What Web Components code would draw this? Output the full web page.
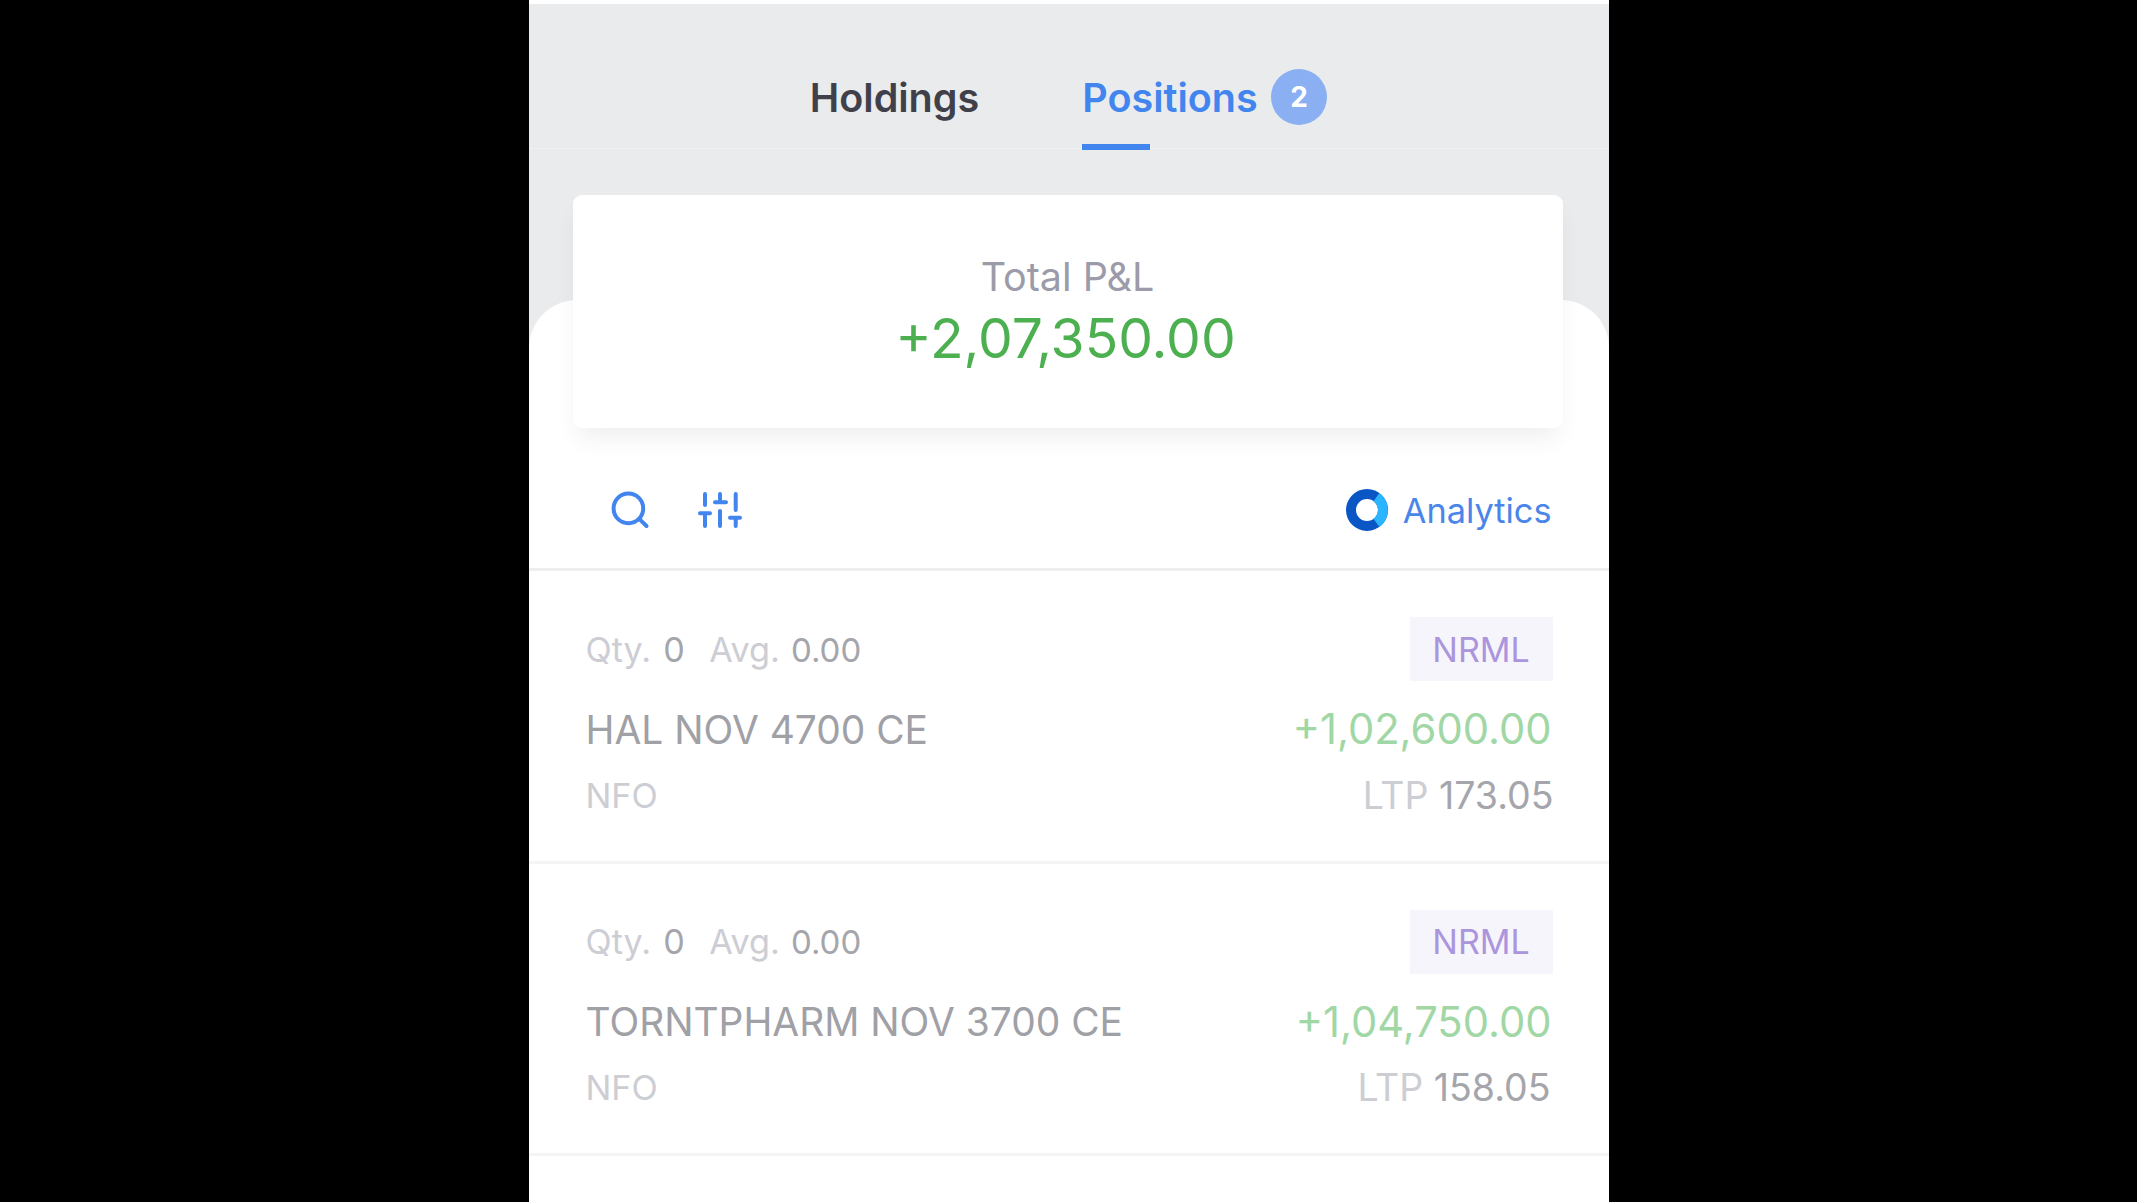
<!DOCTYPE html>
<html><head><meta charset="utf-8"><style>
html,body{margin:0;height:100%;background:#000}
body{font-family:Inter,"Noto Sans",sans-serif;overflow:hidden}
</style></head><body>
<app-stage>
  <tab-bar></tab-bar>
  <pnl-card label="Total P&amp;L" value="+2,07,350.00"></pnl-card>
  <list-panel>
    <tool-bar></tool-bar>
    <pos-row style="--ltp-mr:-1px" qty="0" avg="0.00" name="HAL NOV 4700 CE" pnl="+1,02,600.00" ltp="173.05"></pos-row>
    <pos-row style="--ltp-mr:2px" qty="0" avg="0.00" name="TORNTPHARM NOV 3700 CE" pnl="+1,04,750.00" ltp="158.05"></pos-row>
  </list-panel>
</app-stage>
<script>
function def(name, css, html, attrs){
  customElements.define(name, class extends HTMLElement{
    connectedCallback(){
      if(this.shadowRoot) return;
      const r=this.attachShadow({mode:'open'});
      let h=html;
      (attrs||[]).forEach(a=>{h=h.split('{{'+a+'}}').join((this.getAttribute(a)||'').replace(/&/g,'&amp;'))});
      r.innerHTML='<style>'+css+'</style>'+h;
    }
  });
}
def('app-stage',`
:host{display:flex;justify-content:center;height:1202px;background:#000;}
.phone{width:1080px;height:1202px;background:#eaebed;border-top:4px solid #fff;box-sizing:border-box;overflow:hidden;display:flex;flex-direction:column}
`,`<div class="phone"><slot></slot></div>`);
def('tab-bar',`
:host{display:flex;justify-content:center;height:145px;box-sizing:border-box;gap:103px;
 background:linear-gradient(#eef0f1,#eef0f1) 0 100%/100% 1px no-repeat;font-size:39.5px;font-weight:600}
.t{display:flex;align-items:center;height:145px;box-sizing:border-box;padding-top:42px;color:#3f4049;position:relative}
.a{color:#4285ee}
.b{width:56px;height:56px;border-radius:50%;background:#8aaff2;color:#fff;font-size:28px;font-weight:700;display:flex;align-items:center;justify-content:center;margin-left:13.5px;margin-top:-2px}
.u{position:absolute;left:0;bottom:-1px;width:68px;height:6px;background:#4285ee}
`,`<div class="t">Holdings</div><div class="t a">Positions<span class="b">2</span><span class="u"></span></div>`);
def('pnl-card',`
:host{display:flex;position:relative;z-index:1;flex-direction:column;align-items:center;box-sizing:border-box;width:990px;height:233px;margin:46px 0 0 44px;padding-top:59px;background:#fff;border-radius:9px;box-shadow:0 14px 24px -6px rgba(60,60,70,.09)}
.l{font-size:39.5px;line-height:46px;color:#9c9ba9;}
.v{font-size:55.2px;line-height:64px;color:#4caf50;margin-top:6px;margin-left:-4px}
`,`<div class="l">{{label}}</div><div class="v">{{value}}</div>`,['label','value']);
def('list-panel',`
:host{display:block;flex:1;background:#fff;border-radius:48px 48px 0 0;margin-top:-128px;padding-top:128px}
`,`<slot></slot>`);
def('tool-bar',`
:host{display:flex;align-items:center;box-sizing:border-box;height:143px;border-bottom:3px solid #eeeeef;padding:25px 57px 0 0;color:#4a85ea}
svg{display:block;flex:none}
.sp{flex:1}
.ring{margin-top:-2px}
.a{font-size:34.3px;margin-left:15px}
`,`<svg width="240" height="115" viewBox="0 0 240 115" fill="none" stroke="#4285ee" stroke-width="4" stroke-linecap="round">
<g transform="translate(-529,-453)">
<circle cx="628.4" cy="508.4" r="14.8"/><path d="M639.2 518.9L646.5 526"/>
<path d="M705 494V505M705 513.3V526M700 513.3H710M720 494V502.3M720 511V526M715 502.3H726M735.7 494V510M735.7 517.7V526M730 517.7H740"/></g></svg>
<div class="sp"></div>
<svg class="ring" width="42" height="42" viewBox="0 0 42 42" fill="none" stroke-width="10"><circle cx="21" cy="21" r="16" stroke="#0a56c4"/><path d="M30.4 8.1A16 16 0 0 1 30.4 33.9" stroke="#2bb4ff"/></svg>
<span class="a">Analytics</span>`);
def('pos-row',`
:host{display:block;box-sizing:border-box;height:292.5px;border-bottom:3px solid #f4f4f5;padding:46px 56px 0 57px}
.r{display:flex;justify-content:space-between;align-items:center}
.r1{height:64px;font-size:34.2px}
.info{word-spacing:1.5px}
.q{margin-left:1px}
.v{font-size:33px}
.r2{margin-top:23px;height:50px;font-size:38.9px;color:#a0a0a7}
.r3{margin-top:16px;height:50px;font-size:34.3px;color:#cdcdd4}
.m{color:#cdcdd4}.d{color:#a5a5ac}
.tag{width:143px;height:64px;background:#f7f5fc;color:#ab95dc;display:flex;align-items:center;justify-content:center;font-size:34px}
.g{color:#a1d7a4;margin-right:1px;font-size:41.7px}
.sep{display:inline-block;width:24.4px}
.ltp{font-size:37.5px;margin-right:var(--ltp-mr,0)}
`,`<div class="r r1"><span class="info"><span class="m">Qty.</span> <span class="d q">0</span><span class="sep"></span><span class="m">Avg.</span> <span class="d v">{{avg}}</span></span><span class="tag">NRML</span></div>
<div class="r r2"><span>{{name}}</span><span class="g">{{pnl}}</span></div>
<div class="r r3"><span>NFO</span><span class="ltp">LTP <span class="d">{{ltp}}</span></span></div>`,['avg','name','pnl','ltp']);
</script>
</body></html>
